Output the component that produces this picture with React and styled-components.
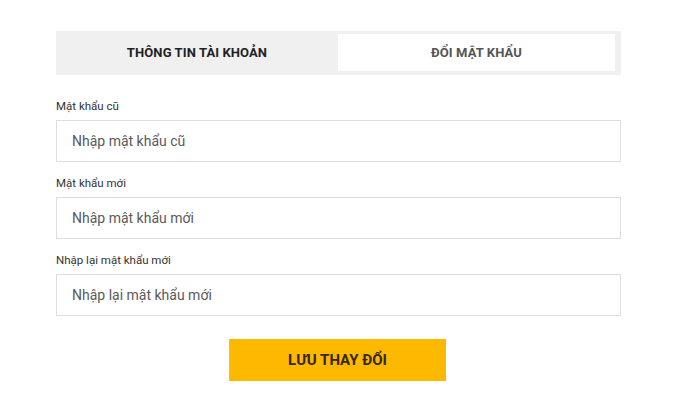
import styled, { createGlobalStyle } from "styled-components";

const Global = createGlobalStyle`
  body {
    margin: 0;
    background: #fff;
    font-family: Roboto, "Liberation Sans", sans-serif;
  }
`;

const Page = styled.div`
  width: 700px;
  height: 420px;
  padding: 31px 0 0 56px;
  box-sizing: border-box;
`;

const Form = styled.div`
  width: 565px;
  display: flex;
  flex-direction: column;
`;

const Tabs = styled.div`
  display: flex;
  height: 44px;
  background: #f0f0f0;
  padding: 3px 6px 4px 0;
  box-sizing: border-box;
  margin-bottom: 23px;
`;

const Tab = styled.div`
  flex: ${(p) => (p.active ? "1" : "0 0 282px")};
  display: flex;
  align-items: center;
  justify-content: center;
  font-size: 13px;
  font-weight: 700;
  letter-spacing: 0.1px;
  color: ${(p) => (p.active ? "#555" : "#222")};
  background: ${(p) => (p.active ? "#fff" : "transparent")};
`;

const Field = styled.div`
  display: flex;
  flex-direction: column;
  margin-bottom: 13px;
`;

const Label = styled.label`
  font-size: 11.5px;
  line-height: 16px;
  color: #333;
  margin-bottom: 6px;
`;

const Input = styled.input`
  height: 42px;
  box-sizing: border-box;
  border: 1px solid #dedede;
  padding: 0 15px;
  font-family: Roboto, "Liberation Sans", sans-serif;
  font-size: 14px;
  color: #333;
  outline: none;
  &::placeholder {
    color: #5a5a5a;
  }
`;

const Button = styled.button`
  align-self: center;
  margin-top: 10px;
  margin-left: -2px;
  width: 217px;
  height: 42px;
  border: none;
  background: #fdb900;
  color: #35270a;
  font-family: Roboto, "Liberation Sans", sans-serif;
  font-size: 15px;
  font-weight: 700;
  cursor: pointer;
`;

const fields = [
  { label: "Mật khẩu cũ", placeholder: "Nhập mật khẩu cũ" },
  { label: "Mật khẩu mới", placeholder: "Nhập mật khẩu mới" },
  { label: "Nhập lại mật khẩu mới", placeholder: "Nhập lại mật khẩu mới" },
];

export default function App() {
  return (
    <>
      <Global />
      <Page>
        <Form>
          <Tabs>
            <Tab>THÔNG TIN TÀI KHOẢN</Tab>
            <Tab active>ĐỔI MẬT KHẨU</Tab>
          </Tabs>
          {fields.map((f) => (
            <Field key={f.label}>
              <Label>{f.label}</Label>
              <Input type="password" placeholder={f.placeholder} />
            </Field>
          ))}
          <Button>LƯU THAY ĐỔI</Button>
        </Form>
      </Page>
    </>
  );
}
